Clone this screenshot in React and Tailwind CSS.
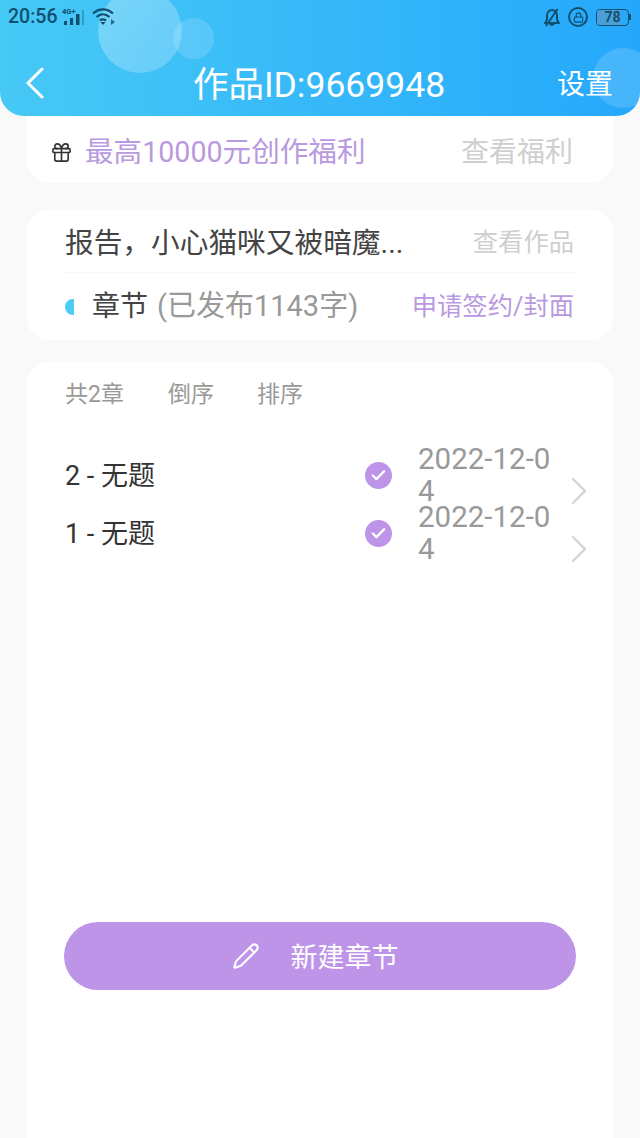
import { Check, Gift, Pencil, Lock } from 'lucide-react';

const font = { fontFamily: 'Roboto, "Noto Sans CJK SC", sans-serif' };

const chapters = [
  { id: 2, title: '2 - 无题', date: '2022-12-04' },
  { id: 1, title: '1 - 无题', date: '2022-12-04' },
];

function StatusBar() {
  return (
    <div className="relative flex h-[34px] items-center justify-between pl-[8px] pr-[9px] text-[#10506f]">
      <div className="flex items-center">
        <span className="text-[19.5px] font-medium leading-none">20:56</span>
        <svg width="26" height="20" viewBox="0 0 26 20" className="ml-[4px]" fill="currentColor">
          <text x="1" y="7" fontSize="7.5" fontWeight="700">4G+</text>
          <rect x="3" y="14" width="3" height="4" />
          <rect x="9" y="11" width="3" height="7" />
          <rect x="15" y="7" width="3.5" height="11" />
          <rect x="21" y="3" width="2" height="15" opacity="0.35" />
        </svg>
        <svg width="26" height="20" viewBox="0 0 26 20" className="ml-[5px]" fill="none" stroke="currentColor" strokeWidth="2.2">
          <path d="M1 6.5C7 1 15 1 21 6.5" />
          <path d="M4.5 10C8.5 6.5 13.5 6.5 17.5 10" />
          <path d="M8 13.5C10 12 12 12 14 13.5" />
          <path d="M11 18l-2.5-3h5z" fill="currentColor" stroke="none" />
          <path d="M19 12v6l4-3z" fill="currentColor" stroke="none" opacity="0.8" />
        </svg>
      </div>
      <div className="flex items-center gap-[6px]">
        <svg width="20" height="20" viewBox="0 0 20 20" fill="none" stroke="currentColor" strokeWidth="2" strokeLinejoin="round">
          <path d="M3 16h14l-2-3V8a5 5 0 0 0-8-4 5 5 0 0 0-2 4v5z" />
          <path d="M8 16.5a2.2 2.2 0 0 0 4 0" />
          <path d="M15.5 2 4 19" />
        </svg>
        <div className="relative flex h-[20px] w-[20px] items-center justify-center rounded-full border-2 border-current">
          <Lock size={11} strokeWidth={2.5} />
        </div>
        <div className="ml-[2px] flex items-center">
          <div className="relative flex h-[17px] w-[33px] items-center justify-center overflow-hidden rounded-[4px] border border-current text-[14px] font-bold leading-none">
            <div className="absolute inset-y-0 left-0 w-[78%] bg-[#4b9fd8]" />
            <span className="relative">78</span>
          </div>
          <div className="h-[6px] w-[2px] bg-current" />
        </div>
      </div>
    </div>
  );
}

function Header() {
  return (
    <header className="relative z-10 h-[116px] overflow-hidden rounded-b-[24px] bg-gradient-to-r from-[#47c9f6] to-[#25a8fb] text-white">
      <div className="absolute left-[98px] top-[-11px] h-[84px] w-[84px] rounded-full bg-gradient-to-br from-white/30 to-white/20" />
      <div className="absolute left-[173px] top-[18px] h-[41px] w-[41px] rounded-full bg-white/15" />
      <div className="absolute left-[593px] top-[48px] h-[60px] w-[60px] rounded-full bg-white/15" />
      <StatusBar />
      <div className="relative grid h-[66px] grid-cols-[1fr_auto_1fr] items-center pl-[25px] pr-[27px] pt-[27px]">
        <svg width="20" height="32" viewBox="0 0 20 32" className="mb-[4px]" fill="none" stroke="currentColor" strokeWidth="3" strokeLinecap="round" strokeLinejoin="round">
          <path d="M17 2 3 16l14 14" />
        </svg>
        <h1 className="text-[35.5px] font-normal leading-[48px]">作品ID:9669948</h1>
        <span className="justify-self-end text-[28px] leading-none">设置</span>
      </div>
    </header>
  );
}

function Chapter({ chapter }) {
  return (
    <div className="flex h-[58px] items-center">
      <span className="mt-[2px] w-[300px] shrink-0 text-[27px] leading-none text-[#333]">{chapter.title}</span>
      <div className="flex h-[27px] w-[27px] shrink-0 items-center justify-center rounded-full bg-[#bd94e8] text-white">
        <Check size={17} strokeWidth={3.4} />
      </div>
      <div className="ml-[26px] w-[140px] shrink-0 break-all text-[29.5px] leading-[32px] text-[#999]">{chapter.date}</div>
      <svg width="16" height="28" viewBox="0 0 16 28" className="ml-[13px] mt-[32px] shrink-0 text-[#d4d4d4]" fill="none" stroke="currentColor" strokeWidth="2.4" strokeLinecap="round" strokeLinejoin="round">
        <path d="M2 2l12 12L2 26" />
      </svg>
    </div>
  );
}

export default function App() {
  return (
    <div className="flex h-[1138px] flex-col overflow-hidden bg-[#f9f9f9]" style={font}>
      <Header />

      <main className="flex flex-1 flex-col px-[26px]">
        <section className="mt-[-20px] flex h-[87px] items-center justify-between rounded-b-[24px] bg-white pl-[24px] pr-[41px] pt-[26px]">
          <div className="flex items-center">
            <Gift size={23} strokeWidth={1.7} className="text-[#333]" />
            <span className="ml-[12px] text-[28.6px] leading-none text-[#b999e0]">最高10000元创作福利</span>
          </div>
          <span className="text-[28px] leading-none text-[#cfcfcf]">查看福利</span>
        </section>

        <section className="mt-[27px] h-[130px] rounded-[24px] bg-white px-[40px]">
          <div className="flex h-[63px] items-center justify-between border-b border-[#f7f7f7] pt-[4px]">
            <span className="ml-[-1px] text-[28.7px] leading-none text-[#444]">报告，小心猫咪又被暗魔...</span>
            <span className="text-[25.3px] leading-none text-[#cfcfcf]">查看作品</span>
          </div>
          <div className="flex h-[67px] items-center justify-between">
            <div className="flex items-center">
              <span className="ml-[-1px] h-[16px] w-[9px] rounded-l-full bg-[#4ccdf3]" />
              <span className="ml-[18px] text-[28px] leading-none text-[#444]">章节</span>
              <span className="ml-[9px] text-[29px] leading-none text-[#999]">(已发布1143字)</span>
            </div>
            <span className="text-[25.3px] leading-none text-[#b999e0]">申请签约/封面</span>
          </div>
        </section>

        <section className="mt-[22px] flex-1 rounded-t-[24px] bg-white px-[39px]">
          <div className="flex h-[64px] items-center gap-[44px] text-[23px] leading-none text-[#999]">
            <span>共2章</span>
            <span>倒序</span>
            <span className="ml-[-1px]">排序</span>
          </div>
          <div className="mt-[20px]">
            {chapters.map((chapter) => (
              <Chapter key={chapter.id} chapter={chapter} />
            ))}
          </div>
          <button className="ml-[-1px] mt-[360px] flex h-[68px] w-[512px] items-center justify-center rounded-full bg-[#bd94e8] pr-[10px] text-[27px] text-white">
            <Pencil size={28} strokeWidth={1.8} />
            <span className="ml-[31px] mt-[5px]">新建章节</span>
          </button>
        </section>
      </main>
    </div>
  );
}
